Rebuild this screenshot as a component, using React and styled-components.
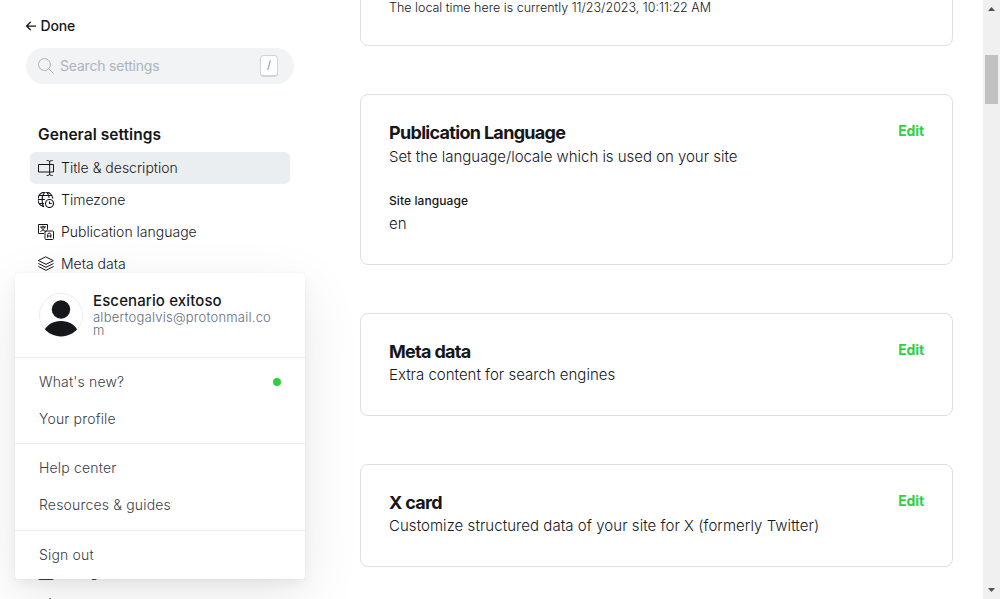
import React from 'react';
import styled, { createGlobalStyle } from 'styled-components';

const Global = createGlobalStyle`
  *, *::before, *::after { box-sizing: border-box; }
  html, body { margin: 0; height: 599px; overflow: hidden; }
  body { background: #fff; color: #15171a; font-family: Inter, "Liberation Sans", sans-serif; font-size: 15px; }
`;

const Page = styled.div`
  display: flex;
  width: 1000px;
  height: 599px;
  overflow: hidden;
`;
const Sidebar = styled.aside`
  width: 320px;
  flex: none;
  padding: 16px 26px 0;
`;
const Done = styled.a`
  display: flex;
  align-items: center;
  gap: 5px;
  height: 20px;
  margin-left: -0.5px;
  padding-bottom: 1px;
  font-size: 14px;
  font-weight: 500;
  letter-spacing: -0.2px;
`;
const Search = styled.div`
  display: flex;
  align-items: center;
  width: 268px;
  height: 36px;
  margin-top: 12px;
  padding: 0 16px 0 12px;
  border-radius: 18px;
  background: #f1f3f4;
  color: #abb4be;
  font-size: 14px;
  letter-spacing: -0.2px;
  svg { margin-right: 6px; }
  span { flex: 1; padding-bottom: 2px; }
`;
const Key = styled.kbd`
  width: 18px;
  height: 22px;
  border: 1px solid #ced4d9;
  border-bottom-width: 2px;
  border-radius: 4px;
  background: #fff;
  color: #7c8b9a;
  font: 400 11px/19px Inter, sans-serif;
  text-align: center;
`;
const GroupTitle = styled.h2`
  margin: 40px 0 0 12px;
  height: 28px;
  font-size: 15.5px;
  line-height: 22px;
  font-weight: 600;
  letter-spacing: 0.05px;
`;
const Nav = styled.nav`
  display: flex;
  flex-direction: column;
  gap: ${(p) => p.$rowGap || 0};
  width: 260px;
  margin: ${(p) => p.$gap || 0} 0 0 4px;
`;
const NavItem = styled.a`
  display: flex;
  align-items: center;
  gap: 7px;
  height: 32px;
  padding: 0 8px;
  border-radius: 5px;
  background: ${(p) => (p.$active ? '#ebeef0' : 'transparent')};
  color: #15171a;
  font-size: 14px;
  font-weight: 300;
  svg { flex: none; }
  span { padding-bottom: 1.5px; }
`;
const Main = styled.main`
  flex: 1;
  display: flex;
  flex-direction: column;
  gap: 48px;
  margin-top: -57px;
  padding: 0 30px 0 40px;
`;
const Card = styled.section`
  flex: none;
  height: ${(p) => p.$h}px;
  padding: 27px 28px;
  border: 1px solid #dddfe4;
  border-radius: 8px;
`;
const Head = styled.header`
  display: flex;
  justify-content: space-between;
`;
const Title = styled.h3`
  margin: 0;
  font-size: 18px;
  line-height: 22px;
  font-weight: 700;
  letter-spacing: -0.69px;
`;
const Text = styled.p`
  margin: ${(p) => p.$mt ?? 1}px 0 0;
  font-size: 15px;
  line-height: 24px;
  font-weight: 300;
  letter-spacing: ${(p) => p.$ls || 0}px;
`;
const Label = styled.h4`
  margin: 23px 0 0;
  font-size: 12px;
  line-height: 18px;
  font-weight: 500;
  letter-spacing: 0.08px;
`;
const Note = styled.p`
  margin: 29px 0 0;
  font-size: 12.5px;
  line-height: 16px;
  font-weight: 300;
  color: #15171a;
`;
const Edit = styled.button`
  align-self: flex-start;
  padding: 0;
  border: 0;
  background: none;
  color: #30cf43;
  font: 700 14px/18px Inter, sans-serif;
  letter-spacing: -0.1px;
`;
const Scroll = styled.div`
  display: flex;
  flex-direction: column;
  flex: none;
  width: 17px;
  background: #f0f0f0;
  svg { display: block; }
`;
const Thumb = styled.div`
  width: 13px;
  height: 49px;
  margin: 38px 2px auto;
  background: #c1c1c1;
`;
const Popup = styled.div`
  position: absolute;
  left: 15px;
  top: 273px;
  width: 290px;
  height: 306px;
  border-radius: 3px;
  background: #fff;
  box-shadow: 0 0 1px rgba(0, 0, 0, 0.12), 0 6px 12px rgba(0, 0, 0, 0.05), 0 18px 60px rgba(0, 0, 0, 0.09);
`;
const Profile = styled.div`
  display: flex;
  gap: 10px;
  height: 84px;
  padding: 20px 24px 0;
`;
const Who = styled.div`
  width: 184px;
  strong {
    display: block;
    font-size: 15px;
    line-height: 15px;
    font-weight: 500;
    letter-spacing: 0.12px;
  }
  span {
    display: block;
    color: #626d79;
    font-size: 13px;
    font-weight: 300;
    line-height: 13px;
    margin-top: 3px;
    letter-spacing: 0.23px;
    word-break: break-all;
  }
`;
const MenuGroup = styled.div`
  height: ${(p) => p.$h}px;
  padding: 5px 24px 0;
  border-top: 1px solid #ebecee;
`;
const MenuItem = styled.a`
  display: flex;
  align-items: center;
  justify-content: space-between;
  height: 37px;
  color: #394047;
  font-size: 14px;
  font-weight: 300;
  letter-spacing: 0.17px;
`;
const Dot = styled.i`
  width: 8px;
  height: 8px;
  border-radius: 50%;
  background: #30cf43;
`;

const Icon = ({ children, size = 16, sw = 1.5 }) => (
  <svg width={size} height={size} viewBox="0 0 24 24" fill="none" stroke="currentColor" strokeWidth={sw} strokeLinecap="round" strokeLinejoin="round">
    {children}
  </svg>
);
const TitleIcon = () => (
  <Icon>
    <path d="M17.500 18H.75V6.75H17.500M17.500 6.750h5.750V18H17.500M17.500 2.500v19M13.500.75c2 0 4 .5 4 2 0-1.500 2-2 4-2M13.500 23.250c2 0 4-.5 4-2 0 1.500 2 2 4 2" />
  </Icon>
);
const ZoneIcon = () => (
  <Icon sw={1.7}>
    <circle cx="17.25" cy="17.25" r="6" />
    <path d="M19.9 17.25h-2.65V14.6M8.8 22.1A11.25 11.25 0 1 1 22.3 9.3M8.2 21.5C7 19.2 6.2 15.8 6.2 12S7.400 3.500 9.700 1M13.600 1c1.500 1.700 2.600 4.500 3 7.200M.8 11.250h9M2.900 5.250h17.700M2.100 17.250h6.200" />
  </Icon>
);
const LanguageIcon = () => (
  <Icon>
    <path d="M8.500 14.250H.750V.750h13.500V8M3.750 4.500h7.500M7.500 3v1.500M10 4.500C9.300 7.500 7 9.800 4.200 11M5.200 5c.8 2.500 2.800 4.800 5.300 5.800" />
    <rect x="10.5" y="10.5" width="12.75" height="12.75" rx="1.5" />
    <path d="M14.500 20v-4a2.400 2.400 0 0 1 4.800 0v4M14.500 18h4.800" />
  </Icon>
);
const LayersIcon = () => (
  <Icon>
    <path d="M12 1.500 23 7 12 12.500 1 7zM1.200 11.500 12 17l10.800-5.500M1.200 16 12 21.500 22.800 16" />
  </Icon>
);
const WindowIcon = () => (
  <Icon>
    <rect x=".75" y="2" width="22.5" height="21" rx="1" />
    <path d="M1 7h22" />
  </Icon>
);
const HornIcon = () => (
  <Icon>
    <path d="M18 3v15C14 14 10 13.500 5 13.500a4 4 0 0 1 0-8C10 5.500 14 5 18 3zM6 14l2 8h4l-2-8" />
  </Icon>
);

export default function App() {
  return (
    <>
      <Global />
      <Page>
        <Sidebar>
          <Done>
            <svg width="10" height="10" viewBox="0 0 10 10" fill="none" stroke="currentColor" strokeWidth="1.25" strokeLinecap="round" strokeLinejoin="round">
              <path d="M9.500 5H.7M4.300 1.200.6 5l3.700 3.800" />
            </svg>
            Done
          </Done>
          <Search>
            <Icon>
              <circle cx="9.8" cy="9.800" r="9" />
              <path d="M16.300 16.300 23.300 23.300" />
            </Icon>
            <span>Search settings</span>
            <Key>/</Key>
          </Search>
          <GroupTitle>General settings</GroupTitle>
          <Nav>
            <NavItem $active><TitleIcon /><span>Title &amp; description</span></NavItem>
            <NavItem><ZoneIcon /><span>Timezone</span></NavItem>
            <NavItem><LanguageIcon /><span>Publication language</span></NavItem>
            <NavItem><LayersIcon /><span>Meta data</span></NavItem>
          </Nav>
          <Nav $gap="276px" $rowGap="1px">
            <NavItem><WindowIcon /><span>Navigation</span></NavItem>
            <NavItem><HornIcon /><span>Announcement bar</span></NavItem>
          </Nav>
        </Sidebar>
        <Main>
          <Card $h={103}>
            <Note>The local time here is currently 11/23/2023, 10:11:22 AM</Note>
          </Card>
          <Card $h={171}>
            <Head><Title>Publication Language</Title><Edit>Edit</Edit></Head>
            <Text $ls={-0.03}>Set the language/locale which is used on your site</Text>
            <Label>Site language</Label>
            <Text $mt={2}>en</Text>
          </Card>
          <Card $h={103}>
            <Head><Title>Meta data</Title><Edit>Edit</Edit></Head>
            <Text $mt={0}>Extra content for search engines</Text>
          </Card>
          <Card $h={103}>
            <Head><Title>X card</Title><Edit>Edit</Edit></Head>
            <Text $mt={0} $ls={0.045}>Customize structured data of your site for X (formerly Twitter)</Text>
          </Card>
        </Main>
        <Scroll>
          <svg width="17" height="17"><path d="M5 11h7L8.500 7z" fill="#505050" /></svg>
          <Thumb />
          <svg width="17" height="17"><path d="M5 6h7L8.500 10z" fill="#505050" /></svg>
        </Scroll>
      </Page>
      <Popup>
        <Profile>
          <svg width="44" height="44" viewBox="0 0 44 44">
            <defs><clipPath id="avatar"><circle cx="22" cy="22" r="21.500" /></clipPath></defs>
            <circle cx="22" cy="22" r="21.500" fill="#fff" stroke="#ebeef0" />
            <g fill="#15171a" clipPath="url(#avatar)">
              <circle cx="22" cy="16.500" r="9.200" />
              <ellipse cx="22" cy="40.500" rx="17" ry="12.500" />
            </g>
          </svg>
          <Who>
            <strong>Escenario exitoso</strong>
            <span>albertogalvis@protonmail.com</span>
          </Who>
        </Profile>
        <MenuGroup $h={86}>
          <MenuItem>What's new?<Dot /></MenuItem>
          <MenuItem>Your profile</MenuItem>
        </MenuGroup>
        <MenuGroup $h={87}>
          <MenuItem>Help center</MenuItem>
          <MenuItem>Resources &amp; guides</MenuItem>
        </MenuGroup>
        <MenuGroup $h={49}>
          <MenuItem>Sign out</MenuItem>
        </MenuGroup>
      </Popup>
    </>
  );
}
